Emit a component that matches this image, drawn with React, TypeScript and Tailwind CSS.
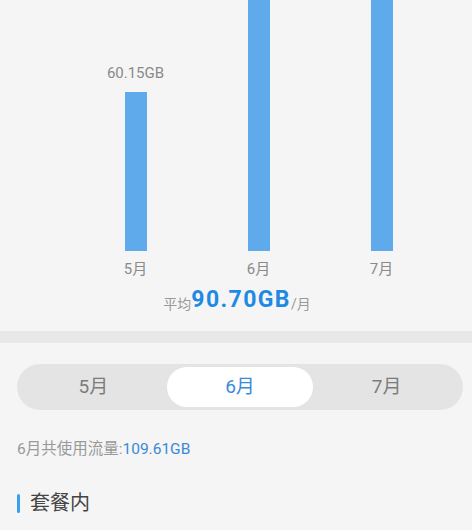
const months = [
  { label: "5月", value: 60.15 },
  { label: "6月", value: 109.61 },
  { label: "7月", value: 102.34 },
];

const PX_PER_GB = 159 / 60.15;

export default function App() {
  const active = 1;
  return (
    <div
      className="w-[472px] h-[530px] overflow-hidden bg-[#f5f5f5] text-[#888]"
      style={{ fontFamily: '"Roboto", "Noto Sans CJK SC", sans-serif' }}
    >
      {/* chart, bars grow upward and get clipped at the top */}
      <div className="h-[251px] overflow-hidden ml-[74px] w-[369px] flex items-end">
        {months.map((m, i) => (
          <div key={m.label} className="w-[123px] shrink-0 flex flex-col items-center">
            {i === 0 && (
              <div className="text-[15px] leading-[18px] mb-[10px] text-[#8a8a8a]">
                60.15GB
              </div>
            )}
            <div
              className="w-[22px] bg-[#5eaaea]"
              style={{ height: m.value * PX_PER_GB }}
            />
          </div>
        ))}
      </div>
      <div className="ml-[74px] w-[369px] grid grid-cols-3 mt-[9px]">
        {months.map((m) => (
          <div key={m.label} className="text-center text-[15px] leading-[18px] text-[#8a8a8a]">
            {m.label}
          </div>
        ))}
      </div>
      <div className="flex items-end justify-center mt-[8px] h-[28px] ml-[2px]">
        <span className="text-[14px] leading-[20px] text-[#999]">平均</span>
        <span className="text-[23px] leading-[28px] font-bold tracking-[1.4px] text-[#1e8ae3]">90.70GB</span>
        <span className="text-[14px] leading-[20px] text-[#999]">/月</span>
      </div>

      <div className="h-[12px] bg-[#e8e8e8] mt-[17px]" />

      {/* month tabs */}
      <div className="ml-[17px] mr-[9px] mt-[21px] h-[46px] rounded-full bg-[#e4e4e4] p-[3px] grid grid-cols-3">
        {months.map((m, i) => (
          <div
            key={m.label}
            className={
              i === active
                ? "rounded-full bg-white flex items-center justify-center text-[19px] text-[#3a8ad6]"
                : "flex items-center justify-center text-[19px] text-[#7c7c7c]"
            }
          >
            {m.label}
          </div>
        ))}
      </div>

      <div className="mx-[17px] mt-[30px] text-[15.5px] leading-[18px] text-[#999]">
        6月共使用流量:<span className="text-[#3a8ad6]">109.61GB</span>
      </div>

      <div className="mx-[17px] mt-[33px] flex items-center gap-[10px]">
        <div className="w-[3px] h-[19px] rounded-full bg-[#3aa0ee]" />
        <div className="text-[20px] leading-[24px] text-[#444]">套餐内</div>
      </div>
    </div>
  );
}
